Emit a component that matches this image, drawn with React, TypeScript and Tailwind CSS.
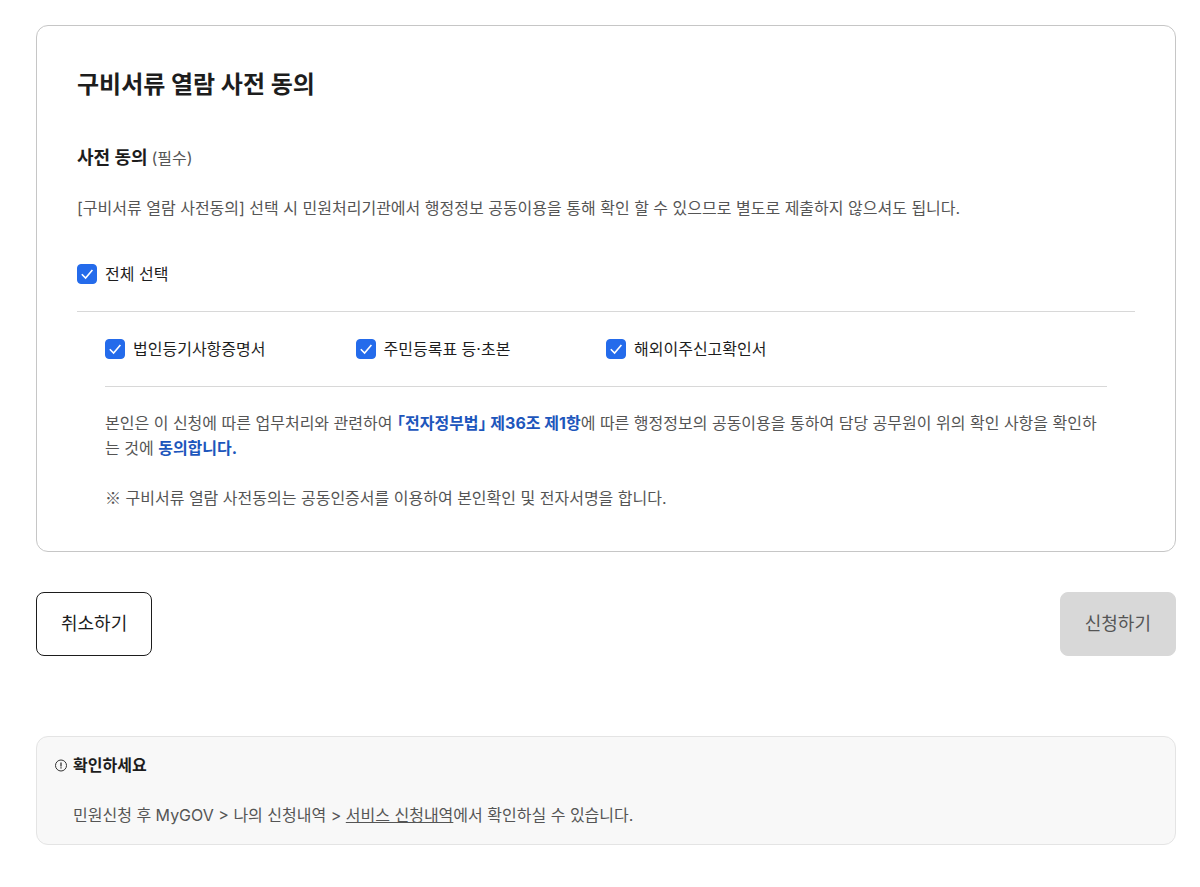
import { useState } from 'react';
import type { ReactNode } from 'react';

type CheckProps = { id: string; label: string; checked: boolean; onChange: (value: boolean) => void };

function Check({ id, label, checked, onChange }: CheckProps) {
  return (
    <div className="flex items-center gap-2">
      <span className="relative flex size-5">
        <input
          id={id}
          type="checkbox"
          checked={checked}
          onChange={(e) => onChange(e.target.checked)}
          className="size-5 appearance-none rounded border border-[#8e8e8e] bg-white checked:border-[#246beb] checked:bg-[#246beb]"
        />
        {checked && (
          <svg viewBox="0 0 20 20" fill="none" className="pointer-events-none absolute inset-0 size-5" aria-hidden="true">
            <path d="M4.8 10.2L8.6 14L15.4 6" stroke="white" strokeWidth="1.6" />
          </svg>
        )}
      </span>
      <label htmlFor={id} className="text-base leading-[26px] text-[#1d1d1d]">
        {label}
      </label>
    </div>
  );
}

function Strong({ children }: { children: ReactNode }) {
  return <strong className="font-bold text-[#1d56bc] [font-feature-settings:'halt']">{children}</strong>;
}

const documents = ['법인등기사항증명서', '주민등록표 등·초본', '해외이주신고확인서'];

export default function App() {
  const [selected, setSelected] = useState<boolean[]>(documents.map(() => true));
  const all = selected.every(Boolean);

  return (
    <main className="break-all bg-white pt-[25px] pr-6 pb-10 pl-9 font-['Inter','Noto_Sans_CJK_KR',sans-serif] text-base leading-[25px] text-[#555555]">
      <section className="rounded-xl border border-[#c6c6c6] p-10">
        <h2 className="text-2xl leading-[38px] font-bold text-[#1d1d1d]">구비서류 열람 사전 동의</h2>
        <h3 className="mt-10 flex items-center gap-1 leading-7">
          <span className="text-lg leading-7 font-bold text-[#1d1d1d]">사전 동의</span>
          <span className="text-base">(필수)</span>
        </h3>
        <p className="mt-6">
          [구비서류 열람 사전동의] 선택 시 민원처리기관에서 행정정보 공동이용을 통해 확인 할 수 있으므로 별도로 제출하지 않으셔도 됩니다.
        </p>
        <div className="mt-10 border-b border-[#d8d8d8] pb-6">
          <Check id="all" label="전체 선택" checked={all} onChange={(v) => setSelected(documents.map(() => v))} />
        </div>
        <div className="px-7">
          <div className="grid grid-cols-4 border-b border-[#d8d8d8] py-6">
            {documents.map((name, i) => (
              <Check
                key={name}
                id={`doc-${i}`}
                label={name}
                checked={selected[i]}
                onChange={(v) => setSelected(selected.map((s, j) => (j === i ? v : s)))}
              />
            ))}
          </div>
          <p className="mt-6">
            본인은 이 신청에 따른 업무처리와 관련하여 <Strong>「전자정부법」 제36조 제1항</Strong>에 따른 행정정보의 공동이용을 통하여 담당 공무원이 위의 확인 사항을 확인하는 것에 <Strong>동의합니다.</Strong>
          </p>
          <p className="mt-6">
            <span className="font-['Noto_Sans_CJK_KR',sans-serif]">※</span> 구비서류 열람 사전동의는 공동인증서를 이용하여 본인확인 및 전자서명을 합니다.
          </p>
        </div>
      </section>

      <div className="mt-10 flex justify-between">
        <button type="button" className="h-16 rounded-lg border border-[#1d1d1d] bg-white px-6 text-lg text-[#1d1d1d]">
          취소하기
        </button>
        <button type="button" disabled className="h-16 rounded-lg border border-[#d8d8d8] bg-[#d8d8d8] px-6 text-lg text-[#555555]">
          신청하기
        </button>
      </div>

      <section className="mt-20 rounded-xl border border-[#e4e4e4] bg-[#f8f8f8] p-4">
        <h3 className="flex items-center gap-1 font-bold text-[#1d1d1d]">
          <svg viewBox="0 0 16 16" fill="none" className="size-4" aria-hidden="true">
            <circle cx="8" cy="7.5" r="5.5" stroke="#333333" />
            <path d="M8 4.5V8.4M8 9.3V10.6" stroke="#333333" strokeWidth="1.3" />
          </svg>
          확인하세요
        </h3>
        <p className="mt-[25px] pl-5">
          민원신청 후 MyGOV &gt; 나의 신청내역 &gt;{' '}
          <a href="#history" className="underline">서비스 신청내역</a>에서 확인하실 수 있습니다.
        </p>
      </section>
    </main>
  );
}
